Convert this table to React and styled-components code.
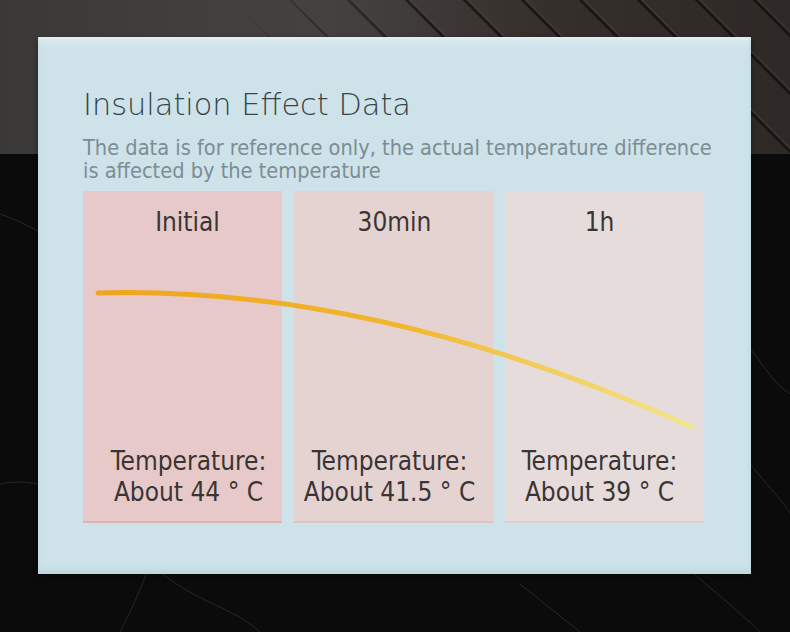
import React from 'react';
import styled, { createGlobalStyle } from 'styled-components';

const GlobalStyle = createGlobalStyle`
  html, body {
    margin: 0;
    padding: 0;
  }
  body {
    width: 790px;
    height: 632px;
    overflow: hidden;
    font-family: "DejaVu Sans Condensed", "Liberation Sans Narrow", "Noto Sans", sans-serif;
  }
`;

const Scene = styled.div`
  position: relative;
  width: 790px;
  height: 632px;
  overflow: hidden;
  padding: 37px 39px 0 38px;
  box-sizing: border-box;
  background:
    linear-gradient(to bottom, transparent 0, transparent 154px, #0b0b0b 154px),
    repeating-linear-gradient(45deg, transparent 0 36px, rgba(15, 12, 10, 0.7) 36px 39px, rgba(80, 72, 66, 0.3) 39px 41px),
    linear-gradient(to right, #3b3937 0%, #454240 40%, #352f2b 70%, #2e2926 100%);
`;

const Shade = styled.div`
  position: absolute;
  left: 0;
  top: 0;
  width: 790px;
  height: 154px;
  background: linear-gradient(to right, #3b3937 0%, #434140 30%, rgba(67, 65, 64, 0) 55%);
`;

const Marble = styled.svg`
  position: absolute;
  left: 0;
  top: 154px;
`;

const Card = styled.section`
  position: relative;
  width: 713px;
  height: 537px;
  box-sizing: border-box;
  padding: 49px 45px 0 45px;
  background: linear-gradient(to bottom, #e4eff2 0, #d3e6ec 6px, #cde2e9 14px, #cde2e9 100%);
  box-shadow: 0 2px 6px rgba(0, 0, 0, 0.35), inset 0 -4px 4px rgba(160, 190, 200, 0.35);
`;

const Title = styled.h1`
  margin: 0;
  font-family: "DejaVu Sans", "Noto Sans", sans-serif;
  font-stretch: condensed;
  font-weight: 300;
  font-size: 30.4px;
  line-height: 38px;
  color: #384448;
`;

const Subtitle = styled.p`
  margin: 11.5px 0 0 0;
  font-size: 21.6px;
  line-height: 23px;
  color: #7c8d93;
  white-space: nowrap;
`;

const Chart = styled.div`
  position: relative;
  margin-top: 9.5px;
  display: grid;
  grid-template-columns: repeat(3, 199px);
  column-gap: 12px;
`;

const Column = styled.div`
  height: 332px;
  display: flex;
  flex-direction: column;
  align-items: center;
  justify-content: space-between;
  padding: 15px 0 13px;
  box-sizing: border-box;
  background: ${(p) => p.$tint};
  border-bottom: 2px solid ${(p) => p.$edge};
  color: #3a3533;
`;

const Label = styled.div`
  font-size: 26px;
  line-height: 32px;
  transform: translateX(${(p) => p.$shift}px);
`;

const Reading = styled.div`
  font-size: 26px;
  line-height: 31px;
  text-align: center;
  transform: translateX(${(p) => p.$shift}px);
`;

const Curve = styled.svg`
  position: absolute;
  left: 0;
  top: 0;
  pointer-events: none;
`;

const columns = [
  { label: 'Initial', value: 'About 44 ° C', tint: '#e6c9c8', edge: '#dcb3b1', labelShift: 5, valueShift: 6 },
  { label: '30min', value: 'About 41.5 ° C', tint: '#e5d3d2', edge: '#dcc4c2', labelShift: 1, valueShift: -4 },
  { label: '1h', value: 'About 39 ° C', tint: '#e5dcdb', edge: '#dcd0ce', labelShift: -5, valueShift: -5 },
];

const veins = [
  'M0 60 C60 80 120 140 210 150 S330 120 420 170 S520 260 600 300',
  'M40 0 C70 60 60 120 110 170 S200 260 180 320 S150 420 120 478',
  'M300 0 C320 40 360 90 340 160 S380 260 430 300',
  'M620 0 C600 60 640 110 700 150 S760 220 790 240',
  'M450 0 C470 50 430 120 470 180 S560 240 620 330 S700 420 760 478',
  'M0 330 C50 320 90 350 140 400 S230 450 260 478',
  'M680 60 C700 120 690 200 720 260 S780 340 790 360',
  'M520 430 L580 478',
];

export default function App() {
  return (
    <>
      <GlobalStyle />
      <Scene>
        <Shade />
        <Marble width="790" height="478" viewBox="0 0 790 478">
          {veins.map((d, i) => (
            <path key={i} d={d} fill="none" stroke="rgba(150,150,150,0.2)" strokeWidth="1" />
          ))}
        </Marble>
        <Card>
          <Title>Insulation Effect Data</Title>
          <Subtitle>
            The data is for reference only, the actual temperature difference
            <br />
            is affected by the temperature
          </Subtitle>
          <Chart>
            {columns.map((c) => (
              <Column key={c.label} $tint={c.tint} $edge={c.edge}>
                <Label $shift={c.labelShift}>{c.label}</Label>
                <Reading $shift={c.valueShift}>
                  Temperature:
                  <br />
                  {c.value}
                </Reading>
              </Column>
            ))}
            <Curve width="621" height="332" viewBox="0 0 621 332">
              <defs>
                <linearGradient id="heat" x1="0" y1="0" x2="1" y2="0">
                  <stop offset="0" stopColor="#eea51c" />
                  <stop offset="0.5" stopColor="#f2b52c" />
                  <stop offset="1" stopColor="#f1e68c" />
                </linearGradient>
              </defs>
              <path
                d="M15 102 C200 97 400 142 609 236"
                fill="none"
                stroke="url(#heat)"
                strokeWidth="5"
                strokeLinecap="round"
              />
            </Curve>
          </Chart>
        </Card>
      </Scene>
    </>
  );
}
